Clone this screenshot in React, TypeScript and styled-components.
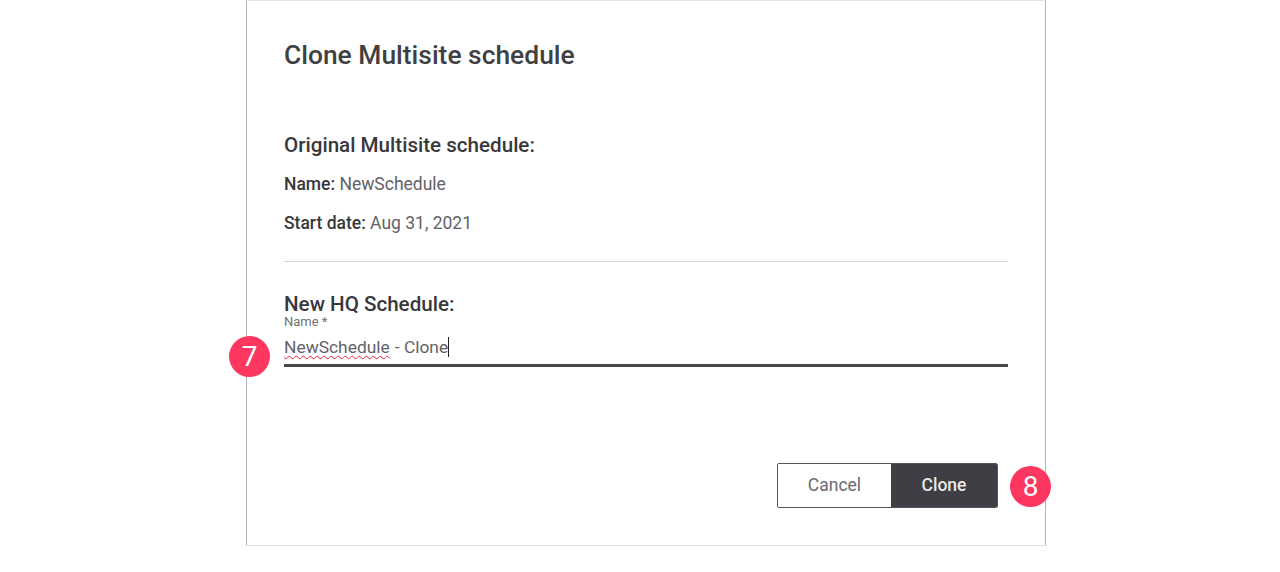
import styled, { createGlobalStyle } from 'styled-components';

const GlobalStyle = createGlobalStyle`
  html, body {
    margin: 0;
    padding: 0;
    background: #fff;
    font-family: Roboto, "Liberation Sans", sans-serif;
  }
`;

const Page = styled.div`
  width: 1280px;
  height: 572px;
  overflow: hidden;
  padding-left: 246px;
  box-sizing: border-box;
  background: #fff;
`;

const Dialog = styled.div`
  box-sizing: border-box;
  width: 800px;
  height: 546px;
  border: 1px solid #b4b4b4;
  border-top-color: #e4e4e4;
  border-bottom-color: #e4e4e4;
  padding: 40px 37px 37px;
  display: flex;
  flex-direction: column;
`;

const Title = styled.h2`
  margin: 0;
  font-size: 26.4px;
  line-height: 28px;
  font-weight: 500;
  color: #3f3f44;
`;

const SectionTitle = styled.h3`
  margin: 0;
  font-size: 20.6px;
  line-height: 22px;
  font-weight: 500;
  color: #38383c;
`;

const Original = styled.section`
  margin-top: 65px;
  display: flex;
  flex-direction: column;
  gap: 18px;
`;

const InfoRow = styled.div`
  font-size: 17.5px;
  line-height: 21px;
  color: #626267;

  strong {
    font-weight: 500;
    color: #38383c;
  }
`;

const Divider = styled.hr`
  margin: 27px 0 0;
  border: 0;
  border-top: 1px solid #d6d6d6;
`;

const NewSchedule = styled.section`
  margin-top: 31px;
`;

const Field = styled.div`
  position: relative;
  border-bottom: 3px solid #47474c;
  height: 52px;
  box-sizing: border-box;
`;

const FieldLabel = styled.div`
  font-size: 13px;
  line-height: 14px;
  color: #707075;
`;

const FieldValue = styled.div`
  margin-top: 8px;
  font-size: 17.4px;
  line-height: 20px;
  color: #626267;
  display: flex;
  align-items: center;
`;

const Misspelled = styled.span`
  text-decoration: underline wavy #e8203a 1px;
  text-underline-offset: 2px;
  margin-right: 5px;
`;

const Caret = styled.span`
  display: inline-block;
  width: 1px;
  height: 20px;
  background: #222;
`;

const Actions = styled.div`
  margin-top: auto;
  padding-right: 10px;
  display: flex;
  justify-content: flex-end;
  position: relative;
`;

const ButtonGroup = styled.div`
  display: flex;
  height: 45px;
  border-radius: 2px;
  overflow: hidden;
  border: 1px solid #55555a;
  box-sizing: border-box;
`;

const Button = styled.button<{ $primary?: boolean }>`
  border: 0;
  margin: 0;
  padding: 0 0 2px;
  height: 100%;
  width: ${p => (p.$primary ? '106px' : '113px')};
  font-family: inherit;
  font-size: 17.5px;
  font-weight: ${p => (p.$primary ? 500 : 400)};
  color: ${p => (p.$primary ? '#e8e8e8' : '#6a6a6f')};
  background: ${p => (p.$primary ? '#3f3e44' : '#fff')};
`;

const Step = styled.span<{ $left: number; $top: number }>`
  position: absolute;
  left: ${p => p.$left}px;
  top: ${p => p.$top}px;
  width: 41px;
  height: 41px;
  border-radius: 50%;
  background: #fd3760;
  color: #fff;
  font-size: 28px;
  font-weight: 400;
  display: flex;
  align-items: center;
  justify-content: center;
`;

export default function App() {
  return (
    <Page>
      <GlobalStyle />
      <Dialog>
        <Title>Clone Multisite schedule</Title>
        <Original>
          <SectionTitle>Original Multisite schedule:</SectionTitle>
          <InfoRow><strong>Name:</strong> NewSchedule</InfoRow>
          <InfoRow><strong>Start date:</strong> Aug 31, 2021</InfoRow>
        </Original>
        <Divider />
        <NewSchedule>
          <SectionTitle>New HQ Schedule:</SectionTitle>
          <Field>
            <FieldLabel>Name *</FieldLabel>
            <FieldValue>
              <Misspelled>NewSchedule</Misspelled>- Clone<Caret />
            </FieldValue>
            <Step $left={-55} $top={21}>7</Step>
          </Field>
        </NewSchedule>
        <Actions>
          <ButtonGroup>
            <Button>Cancel</Button>
            <Button $primary>Clone</Button>
          </ButtonGroup>
          <Step $left={726} $top={3}>8</Step>
        </Actions>
      </Dialog>
    </Page>
  );
}
